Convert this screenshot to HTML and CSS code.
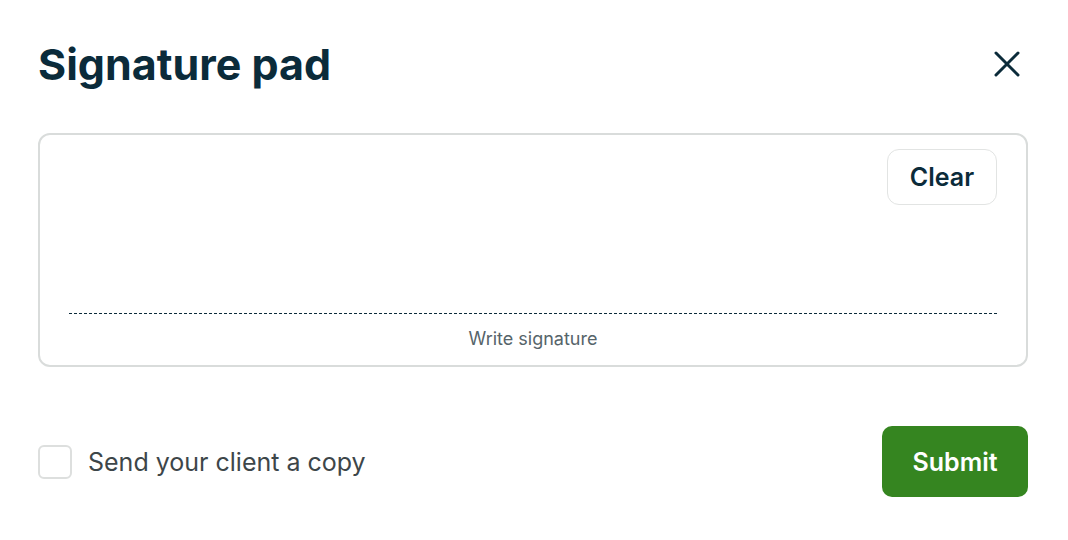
FILE: index.html
```html
<!DOCTYPE html>
<html lang="en">
  <head>
    <meta charset="UTF-8" />
    <meta name="viewport" content="width=device-width, initial-scale=1.0" />
    <title>Signature pad</title>
    <link rel="stylesheet" href="styles.css">
  </head>
  <body>
    <div class="modal">
      <div class="header">
        <h1>Signature pad</h1>
        <button class="close" aria-label="Close">
          <svg width="28" height="28" viewBox="0 0 28 28" fill="none">
            <path d="M3 3L25 25M25 3L3 25" stroke="#0b2b3a" stroke-width="3" stroke-linecap="round" />
          </svg>
        </button>
      </div>

      <div class="pad">
        <div class="pad-top">
          <button class="clear">Clear</button>
        </div>
        <div class="line"></div>
        <p class="hint">Write signature</p>
      </div>

      <div class="footer">
        <label class="copy">
          <span class="box"></span>
          Send your client a copy
        </label>
        <button class="submit">Submit</button>
      </div>
    </div>
  </body>
</html>
```

FILE: styles.css
```css
body {
  margin: 0;
  font-family: Inter, "Noto Sans", sans-serif;
  background: #fff;
  color: #0b2b3a;
}

.modal {
  width: 1068px;
  box-sizing: border-box;
  padding: 34px 40px 0 38px;
}

.header {
  display: flex;
  justify-content: space-between;
  align-items: center;
  height: 60px;
}

h1 {
  margin: 0;
  font-size: 43px;
  line-height: 60px;
  font-weight: 700;
  color: #0b2b3a;
}

.close {
  background: none;
  border: none;
  padding: 0;
  margin-right: 7px;
  cursor: pointer;
  display: flex;
}

.pad {
  margin-top: 39px;
  height: 234px;
  box-sizing: border-box;
  border: 2px solid #d9dcdb;
  border-radius: 12px;
  padding: 14px 29px 16px;
  display: flex;
  flex-direction: column;
}

.pad-top {
  flex: 1;
  display: flex;
  justify-content: flex-end;
  align-items: flex-start;
}

.clear {
  font-family: inherit;
  font-size: 25px;
  font-weight: 600;
  color: #0b2b3a;
  background: #fff;
  border: 1px solid #e2e4e3;
  border-radius: 12px;
  width: 110px;
  height: 56px;
  cursor: pointer;
}

.line {
  border-top: 1px dashed #0b2b3a;
}

.hint {
  margin: 14px 0 0;
  text-align: center;
  font-size: 18px;
  line-height: 21px;
  color: #56646a;
}

.footer {
  margin-top: 59px;
  display: flex;
  justify-content: space-between;
  align-items: center;
}

.copy {
  display: flex;
  align-items: center;
  gap: 16px;
  font-size: 25px;
  color: #3d4649;
  cursor: pointer;
}

.box {
  width: 34px;
  height: 34px;
  box-sizing: border-box;
  border: 2px solid #dddfde;
  border-radius: 6px;
}

.submit {
  font-family: inherit;
  font-size: 25px;
  font-weight: 600;
  color: #fff;
  background: #358520;
  border: none;
  border-radius: 10px;
  width: 146px;
  height: 71px;
  cursor: pointer;
}
```
